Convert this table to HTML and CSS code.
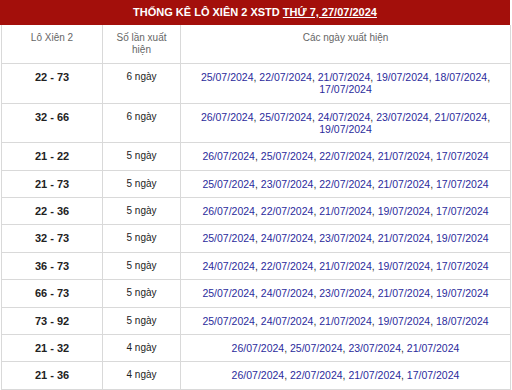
FILE: index.html
```html
<!DOCTYPE html>
<html lang="vi">
<head>
<meta charset="utf-8">
<title>Thống kê lô xiên 2 XSTD</title>
<link rel="stylesheet" href="styles.css">
</head>
<body>
<div class="box">
  <h2 class="title">THỐNG KÊ LÔ XIÊN 2 XSTD <a href="#" class="title-link">THỨ 7, 27/07/2024</a></h2>
  <table class="stats">
    <colgroup>
      <col class="c1"><col class="c2"><col class="c3">
    </colgroup>
    <thead>
      <tr><th>Lô Xiên 2</th><th>Số lần xuất hiện</th><th>Các ngày xuất hiện</th></tr>
    </thead>
    <tbody>
      <tr><td class="pair">22 - 73</td><td class="cnt">6 ngày</td><td class="dates"><a>25/07/2024</a>, <a>22/07/2024</a>, <a>21/07/2024</a>, <a>19/07/2024</a>, <a>18/07/2024</a>, <a>17/07/2024</a></td></tr>
      <tr><td class="pair">32 - 66</td><td class="cnt">6 ngày</td><td class="dates"><a>26/07/2024</a>, <a>25/07/2024</a>, <a>24/07/2024</a>, <a>23/07/2024</a>, <a>21/07/2024</a>, <a>19/07/2024</a></td></tr>
      <tr><td class="pair">21 - 22</td><td class="cnt">5 ngày</td><td class="dates"><a>26/07/2024</a>, <a>25/07/2024</a>, <a>22/07/2024</a>, <a>21/07/2024</a>, <a>17/07/2024</a></td></tr>
      <tr><td class="pair">21 - 73</td><td class="cnt">5 ngày</td><td class="dates"><a>25/07/2024</a>, <a>23/07/2024</a>, <a>22/07/2024</a>, <a>21/07/2024</a>, <a>17/07/2024</a></td></tr>
      <tr><td class="pair">22 - 36</td><td class="cnt">5 ngày</td><td class="dates"><a>26/07/2024</a>, <a>22/07/2024</a>, <a>21/07/2024</a>, <a>19/07/2024</a>, <a>17/07/2024</a></td></tr>
      <tr><td class="pair">32 - 73</td><td class="cnt">5 ngày</td><td class="dates"><a>25/07/2024</a>, <a>24/07/2024</a>, <a>23/07/2024</a>, <a>21/07/2024</a>, <a>19/07/2024</a></td></tr>
      <tr><td class="pair">36 - 73</td><td class="cnt">5 ngày</td><td class="dates"><a>24/07/2024</a>, <a>22/07/2024</a>, <a>21/07/2024</a>, <a>19/07/2024</a>, <a>17/07/2024</a></td></tr>
      <tr><td class="pair">66 - 73</td><td class="cnt">5 ngày</td><td class="dates"><a>25/07/2024</a>, <a>24/07/2024</a>, <a>23/07/2024</a>, <a>21/07/2024</a>, <a>19/07/2024</a></td></tr>
      <tr><td class="pair">73 - 92</td><td class="cnt">5 ngày</td><td class="dates"><a>25/07/2024</a>, <a>24/07/2024</a>, <a>21/07/2024</a>, <a>19/07/2024</a>, <a>18/07/2024</a></td></tr>
      <tr><td class="pair">21 - 32</td><td class="cnt">4 ngày</td><td class="dates"><a>26/07/2024</a>, <a>25/07/2024</a>, <a>23/07/2024</a>, <a>21/07/2024</a></td></tr>
      <tr><td class="pair">21 - 36</td><td class="cnt">4 ngày</td><td class="dates"><a>26/07/2024</a>, <a>22/07/2024</a>, <a>21/07/2024</a>, <a>17/07/2024</a></td></tr>
    </tbody>
  </table>
</div>
</body>
</html>
```

FILE: styles.css
```css
html, body {
  margin: 0;
  padding: 0;
  background: #fff;
  font-family: "Liberation Sans", Arial, sans-serif;
}

.box {
  width: 510px;
}

.title {
  margin: 0;
  height: 25px;
  line-height: 25px;
  background: #a30f0b;
  color: #fff;
  font-size: 11px;
  font-weight: bold;
  text-align: center;
}

.title-link {
  color: #fff;
  text-decoration: underline;
}

.stats {
  width: 509px;
  margin-left: 1px;
  border-collapse: collapse;
  table-layout: fixed;
}

.c1 { width: 101px; }
.c2 { width: 78px; }
.c3 { width: 330px; }

.stats th,
.stats td {
  border: 1px solid #d9d9d9;
  padding: 7px 4px 7.4px;
  line-height: 12px;
  text-align: center;
  vertical-align: top;
}

.stats thead th {
  border-top: none;
  font-weight: normal;
  font-size: 10px;
  color: #666;
}

.pair {
  font-size: 11px;
  font-weight: bold;
  color: #222;
}

.cnt {
  font-size: 10px;
  color: #222;
}

.dates {
  font-size: 10.5px;
  color: #333;
}

.dates a {
  color: #2b2b9c;
  text-decoration: none;
}
```
